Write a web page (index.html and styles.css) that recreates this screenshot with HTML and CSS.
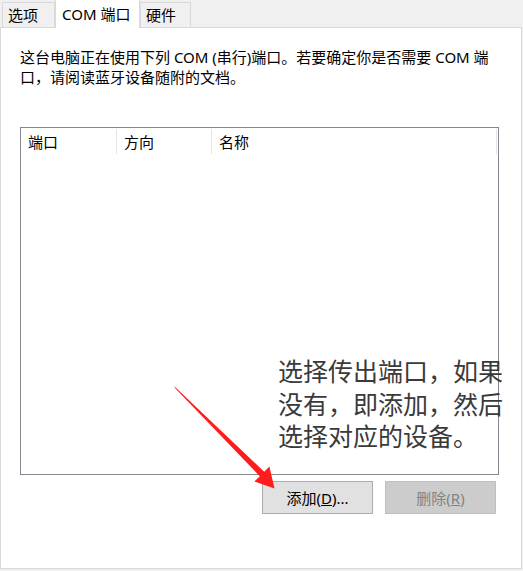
FILE: index.html
```html
<!DOCTYPE html>
<html>

<head>
  <meta charset="utf-8">
  <title>蓝牙设置 - COM 端口</title>
  <link rel="stylesheet" href="styles.css">
</head>

<body>
  <div class="tabs">
    <div class="tab">选项</div>
    <div class="tab active">COM 端口</div>
    <div class="tab">硬件</div>
  </div>

  <div class="panel">
    <p class="intro">这台电脑正在使用下列 COM (串行)端口。若要确定你是否需要 COM 端口，请阅读蓝牙设备随附的文档。</p>

    <div class="listbox">
      <div class="listhead">
        <div class="col c1">端口</div>
        <div class="col c2">方向</div>
        <div class="col c3">名称</div>
      </div>
    </div>

    <div class="buttons">
      <button class="btn">添加(<u>D</u>)...</button>
      <button class="btn" disabled>删除(<u>R</u>)</button>
    </div>

    <!-- annotation on top of the dialog -->
    <div class="note">选择传出端口，如果<br>没有，即添加，然后<br>选择对应的设备。</div>
    <svg class="arrow" width="523" height="571" viewBox="0 0 523 571">
      <polygon points="174,386 264.2,471.8 269.4,466.6 274.5,488.5 254.4,481.4 259.8,476.2 175.4,388.6" fill="#ff1c1c" />
    </svg>
  </div>
</body>

</html>
```

FILE: styles.css
```css
body {
  margin: 0;
  background-color: #f0f0f0;
  font-family: "Noto Sans", "Noto Sans CJK SC", sans-serif;
  font-size: 15px;
  color: #000;
}

/*///////////////////////////////////////////////////////////////////////////*/
.tabs {
  display: flex;
  align-items: flex-end;
  height: 27px;
  padding-left: 2px;
  position: relative;
  z-index: 1;
}

.tab {
  height: 24px;
  line-height: 24px;
  padding: 0 5px;
  border: 1px solid #d9d9d9;
  border-bottom: none;
  background-color: #f0f0f0;
}

.tab:first-child {
  width: 41px;
}

.tab.active {
  height: 28px;
  line-height: 28px;
  margin-bottom: -1px;
  padding: 0 6px;
  background-color: #fff;
  border-color: #d9d9d9;
  width: 71px;
}

.tab:last-child {
  width: 39px;
}

/*///////////////////////////////////////////////////////////////////////////*/
.panel {
  position: relative;
  width: 522px;
  height: 542px;
  background-color: #fff;
  border: 1px solid #d9d9d9;
  box-sizing: border-box;
  padding: 19px 0 0 19px;
}

.intro {
  margin: 0;
  width: 480px;
  line-height: 20px;
}

.listbox {
  margin-top: 40px;
  width: 479px;
  height: 348px;
  border: 1px solid #828790;
  box-sizing: border-box;
}

.listhead {
  display: flex;
  height: 27px;
}

.col {
  padding: 0 0 0 7px;
  line-height: 26px;
  border-right: 1px solid #e5e5e5;
  margin: 1px 0;
}

.c1 {
  width: 88px;
}

.c2 {
  width: 87px;
}

.c3 {
  width: 277px;
}

.buttons {
  display: flex;
  gap: 12px;
  margin: 6px 0 0 242px;
}

.btn {
  width: 111px;
  height: 33px;
  font-family: "Noto Sans", "Noto Sans CJK SC", sans-serif;
  font-size: 15px;
  color: #000;
  background-color: #e1e1e1;
  border: 1px solid #adadad;
  padding: 0;
}

.btn:disabled {
  color: #838383;
  background-color: #cccccc;
  border-color: #bfbfbf;
}

/*///////////////////////////////////////////////////////////////////////////*/
.note {
  position: absolute;
  left: 277px;
  top: 327px;
  font-size: 25px;
  line-height: 32.5px;
  color: #3a3a3a;
  white-space: nowrap;
}

.arrow {
  position: absolute;
  left: -1px;
  top: -28px;
}
```
